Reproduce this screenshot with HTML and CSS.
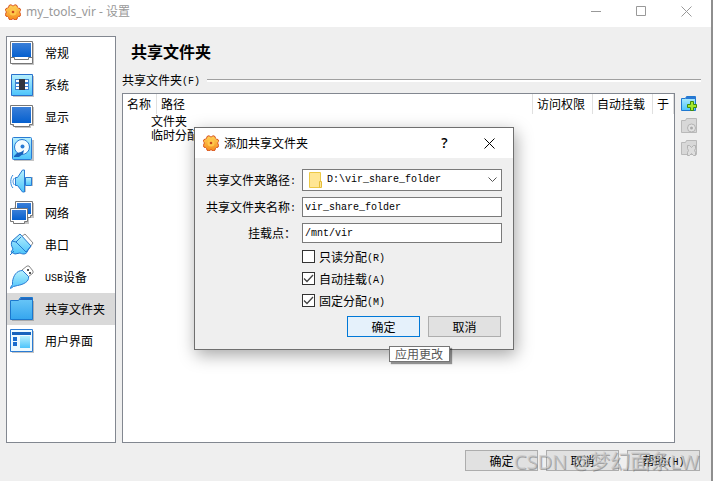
FILE: index.html
```html
<!DOCTYPE html>
<html lang="zh-CN">
<head>
    <meta charset="UTF-8">
    <meta name="viewport" content="width=device-width, initial-scale=1.0">
    <title>my_tools_vir - 设置</title>
    <link rel="stylesheet" href="styles.css">
</head>
<body>
    <!-- shared icon shapes -->
    <svg class="defs" width="0" height="0">
        <defs>
            <linearGradient id="screen" x1="0" y1="0" x2="0" y2="1">
                <stop offset="0" stop-color="#3a7fd8"/>
                <stop offset="1" stop-color="#0560cf"/>
            </linearGradient>
            <linearGradient id="aqua" x1="0" y1="0" x2="0" y2="1">
                <stop offset="0" stop-color="#b8f0fd"/>
                <stop offset="1" stop-color="#4cc4fb"/>
            </linearGradient>
            <linearGradient id="folder" x1="0" y1="0" x2="0" y2="1">
                <stop offset="0" stop-color="#6cc8f8"/>
                <stop offset="1" stop-color="#35a6ee"/>
            </linearGradient>
            <linearGradient id="orange" x1="0" y1="0" x2="0" y2="1">
                <stop offset="0" stop-color="#ffd65a"/>
                <stop offset="1" stop-color="#f58a1c"/>
            </linearGradient>
            <symbol id="gear" viewBox="0 0 16 16">
                <path d="M6 .7l1.200 1h1.600l1.200-1 2 .8.3 1.500 1.200 1.200 1.500.3.8 2-1 1v1.500l1 1.200-.8 2-1.500.3-1.200 1.200-.3 1.500-2 .8-1.200-1H7.200l-1.200 1-2-.8-.3-1.500-1.200-1.200-1.500-.3-.8-2 1-1.200V7.500l-1-1 .8-2 1.500-.3 1.200-1.200.3-1.500z" fill="url(#orange)" stroke="#d9541e"/>
                <circle cx="8" cy="8" r="3.500" fill="#ffc84a"/>
                <circle cx="8" cy="8" r="1.300" fill="#c8481a"/>
            </symbol>
        </defs>
    </svg>

    <div class="window">
        <header class="titlebar">
            <svg class="app-icon"><use href="#gear"/></svg>
            <span class="title">my_tools_vir - 设置</span>
            <button class="win-btn" aria-label="最小化"><svg width="11" height="11"><path d="M0 5.500h10"/></svg></button>
            <button class="win-btn" aria-label="最大化"><svg width="11" height="11"><path d="M.5.5h9v9h-9z"/></svg></button>
            <button class="win-btn" aria-label="关闭"><svg width="11" height="11"><path d="M.5.5l10 10M10.500.5l-10 10"/></svg></button>
        </header>

        <main class="main">
            <nav class="sidebar">
                <a href="#general">
                    <svg viewBox="0 0 24 24"><path d="M2 2h22v22H2z" fill="#c4c4c4"/><path d="M.5.5h22v22H.500z" fill="#fff" stroke="#777"/><path d="M2 2h19v14H2z" fill="url(#screen)"/><path d="M1 16.500h3.500v2h14v-2H22" fill="none" stroke="#777"/></svg>
                    常规</a>
                <a href="#system">
                    <svg viewBox="0 0 24 24"><path d="M3 3h21v21H3z" fill="#c4c4c4"/><path d="M1.500 1.500h21v21h-21z" fill="url(#aqua)" stroke="#2a72cc"/><path d="M5 6h14v11H5z" fill="#3d82d2"/><path d="M6 7h4v2H6zm0 4h4v2H6zm0 3h4v2H6zm8-7h4v2h-4zm0 4h4v2h-4zm0 3h4v2h-4z" fill="#fff"/><path d="M9 6h6v11H9z" fill="#33353d"/></svg>
                    系统</a>
                <a href="#display">
                    <svg viewBox="0 0 24 24"><path d="M2 2h22v19h-3v2H5v-2H2z" fill="#c4c4c4"/><path d="M.5.5h22v19h-3v2h-16v-2h-3z" fill="#fff" stroke="#777"/><path d="M2 2h19v16H2z" fill="url(#screen)"/></svg>
                    显示</a>
                <a href="#storage">
                    <svg viewBox="0 0 24 24"><path d="M4 3h20v21H4z" fill="#c4c4c4"/><rect x="2.500" y=".5" width="19" height="22" rx="1" fill="url(#aqua)" stroke="#2a7bd4"/><circle cx="12" cy="10" r="7.500" fill="#f4fcff" stroke="#2a7bd4"/><circle cx="12.500" cy="9.500" r="2" fill="#2a7bd4"/><path d="M4 19l3-3 4-1 3-2-1 4-4 3H4z" fill="#1763bd"/></svg>
                    存储</a>
                <a href="#audio">
                    <svg viewBox="0 0 24 24"><path d="M8 9l7-7v6h8v9h-7v6h-2l-6-6z" fill="#c4c4c4"/><path d="M15.500 8.500h6v8h-6z" fill="url(#aqua)" stroke="#2a7bd4"/><path d="M5.500 8.500h2l5-7.500h2v22h-2l-5-6.500h-2z" fill="url(#aqua)" stroke="#2a7bd4"/><path d="M3 6c-3 3-3 10 0 13M4.500 9c-2 2-2 5 0 7" fill="none" stroke="#3288dc"/></svg>
                    声音</a>
                <a href="#network">
                    <svg viewBox="0 0 24 24"><path d="M7 2h17v15h-5v6H5v-2H2V10z" fill="#c4c4c4"/><path d="M5.500.5h17v14h-2v2h-12v-2h-3z" fill="#fff" stroke="#777"/><path d="M7 2h14v11H7z" fill="url(#screen)"/><path d="M.5 7.500h17v13h-3v2h-11v-2h-3z" fill="#fff" stroke="#777"/><path d="M2 9h14v10H2z" fill="url(#screen)"/></svg>
                    网络</a>
                <a href="#serial">
                    <svg viewBox="0 0 24 24"><path d="M11 4l4-3 8 9-3 4" fill="#fff" stroke="#888"/><path d="M2 8l8-7 11 12-3 4c-1 4-4 5-8 3l-5 1-4-2 2-3c-2-4-2-5-1-8z" fill="url(#aqua)" stroke="#2477ce"/><path d="M2 8l4 1 5-5M6 9l10 10 5-6M4 18l-4 4" fill="none" stroke="#2477ce"/></svg>
                    串口</a>
                <a href="#usb">
                    <svg viewBox="0 0 24 24"><path d="M12 5l5-4h2l4 5v2l-5 4z" fill="#fff" stroke="#888"/><path d="M17 4h2v2h-2zm2 3h2v2h-2z" fill="#555"/><path d="M12.500 5.500l6 6c1 5-5 8-11 9l-4 1-3 2 0-1 2-3 0-3c1-6 4-11 10-11z" fill="url(#aqua)" stroke="#2a7bd4"/></svg>
                    <span><span class="latin">USB</span>设备</span></a>
                <a href="#shared" class="active">
                    <svg viewBox="0 0 24 24"><path d="M2 4h22v20H2z" fill="#aaa"/><path d="M.5 3.500h8l2-3h12v22H.500z" fill="url(#folder)" stroke="#1b78ce"/><path d="M9 3h13V1H11z" fill="#2368bd"/></svg>
                    共享文件夹</a>
                <a href="#ui">
                    <svg viewBox="0 0 24 24"><path d="M2 2h22v22H2z" fill="#c4c4c4"/><path d="M.5.5h22v22H.500z" fill="#edfaff" stroke="#2a7bd4"/><path d="M2 3h19v3H2z" fill="#1763bd"/><path d="M3 8h4v4H3zm0 5h4v4H3z" fill="#1b6ccd"/><path d="M10 7h10v12H10z" fill="url(#aqua)"/></svg>
                    用户界面</a>
            </nav>

            <section class="content">
                <h1>共享文件夹</h1>
                <div class="group-title"><span>共享文件夹<span class="latin">(F)</span></span></div>
                <div class="folders">
                    <div class="tree">
                        <table>
                            <colgroup>
                                <col class="col-name"><col><col class="col-access"><col class="col-access"><col class="col-at">
                            </colgroup>
                            <thead>
                                <tr><th>名称</th><th>路径</th><th>访问权限</th><th>自动挂载</th><th>于</th></tr>
                            </thead>
                            <tbody>
                                <tr><td colspan="5">文件夹</td></tr>
                                <tr><td colspan="5">临时分配</td></tr>
                            </tbody>
                        </table>
                    </div>
                    <div class="tools">
                        <button aria-label="添加共享文件夹">
                            <svg viewBox="0 0 16 16"><path d="M.5 2.500h4l1-2h9v14H.500z" fill="url(#aqua)" stroke="#1f78d0"/><path d="M5 1h10v2H5z" fill="#2a78d4"/><path d="M9.500 5.500h3v3h3v3h-3v3h-3v-3h-3v-3h3z" fill="#a4e82c" stroke="#3f8a0c"/></svg>
                        </button>
                        <button aria-label="编辑共享文件夹" disabled>
                            <svg viewBox="0 0 16 16"><path d="M.5 2.500h4l1-2h10v14H.500z" fill="#d8d8d8" stroke="#b9b9b9"/><circle cx="10.500" cy="10" r="4" fill="#e2e2e2" stroke="#b3b3b3"/><circle cx="10.500" cy="10" r="1.500" fill="#aaa"/></svg>
                        </button>
                        <button aria-label="删除共享文件夹" disabled>
                            <svg viewBox="0 0 16 16"><path d="M.5 2.500h4l1-2h10v14H.500z" fill="#d8d8d8" stroke="#b9b9b9"/><path d="M6.500 5.500h2l2 2 2-2h2v3l-1 2 1 2v3h-2l-2-2-2 2h-2v-3l1-2-1-2z" fill="#dedede" stroke="#b3b3b3"/></svg>
                        </button>
                    </div>
                </div>
            </section>
        </main>

        <footer class="footer">
            <button class="btn">确定</button>
            <button class="btn">取消</button>
            <button class="btn">帮助<span class="latin">(H)</span></button>
        </footer>
        <div class="watermark">CSDN @梦幻面条LW</div>
    </div>

    <div class="dialog" role="dialog" aria-labelledby="dialog-title">
        <header class="dialog-title">
            <svg class="app-icon"><use href="#gear"/></svg>
            <span id="dialog-title">添加共享文件夹</span>
            <button class="win-btn help" aria-label="帮助">?</button>
            <button class="win-btn" aria-label="关闭"><svg width="11" height="11"><path d="M.5.5l10 10M10.500.5l-10 10"/></svg></button>
        </header>
        <form class="form">
            <label for="path">共享文件夹路径<span class="latin">:</span></label>
            <div class="combo">
                <svg class="folder-icon" viewBox="0 0 14 16"><path d="M.5.5h11v15H.500z" fill="#ffe694" stroke="#ecc846"/><path d="M10.500 9.500h2v6h-2z" fill="#ffe694" stroke="#e5bd38"/></svg>
                <select id="path" name="path">
                    <option>D:\vir_share_folder</option>
                </select>
                <svg class="arrow" viewBox="0 0 9 6"><path d="M.5.5l4 4 4-4" fill="none" stroke="#555"/></svg>
            </div>

            <label for="name">共享文件夹名称<span class="latin">:</span></label>
            <input type="text" id="name" name="name" value="vir_share_folder">

            <label for="mount">挂载点：</label>
            <input type="text" id="mount" name="mount" value="/mnt/vir">

            <div class="checks">
                <label><input type="checkbox" name="readonly"><span>只读分配<span class="latin">(R)</span></span></label>
                <label><input type="checkbox" name="auto" checked><span>自动挂载<span class="latin">(A)</span></span></label>
                <label><input type="checkbox" name="permanent" checked><span>固定分配<span class="latin">(M)</span></span></label>
            </div>

            <div class="actions">
                <button type="button" class="btn primary">确定</button>
                <button type="button" class="btn">取消</button>
            </div>
        </form>
        <div class="tooltip" role="tooltip">应用更改</div>
    </div>
</body>
</html>
```
FILE: styles.css
```css
* {
    box-sizing: border-box;
}

body {
    margin: 0;
    font-family: "Noto Sans CJK SC", sans-serif;
    font-size: 12px;
    line-height: 16px;
    color: #000;
    background-color: #efefef;
}

button, input, select {
    font: inherit;
    color: inherit;
}

.defs {
    position: absolute;
}

.window {
    position: relative;
    display: flex;
    flex-direction: column;
    min-height: 100vh;
    border-right: 2px solid #8e8e8e;
}

/* title bars */
.titlebar {
    display: flex;
    align-items: center;
    height: 27px;
    padding: 0 2px 4px 5px;
    background-color: #fff;
    color: #999;
    font-family: "Noto Sans", "Noto Sans CJK SC", sans-serif;
}

.title {
    flex: 1;
    margin-left: 5px;
}

.app-icon {
    width: 16px;
    height: 16px;
}

.win-btn {
    display: flex;
    align-items: center;
    justify-content: center;
    width: 45px;
    height: 22px;
    padding: 0;
    border: none;
    background: none;
}

.win-btn svg {
    fill: none;
    stroke: currentColor;
}

/* main area */
.main {
    flex: 1;
    display: flex;
    gap: 6px;
    padding: 9px 10px 0 6px;
}

.sidebar {
    width: 110px;
    flex: none;
    border: 1px solid #828790;
    background-color: #fff;
}

.sidebar a {
    display: flex;
    align-items: center;
    gap: 11px;
    height: 32px;
    padding-left: 3px;
    color: #000;
    text-decoration: none;
}

.sidebar a.active {
    background-color: #d9d9d9;
}

.sidebar svg {
    width: 24px;
    height: 24px;
}

.latin {
    font-family: "Liberation Mono", monospace;
    font-size: 10px;
    line-height: 10px;
    vertical-align: 1px;
}

.content {
    flex: 1;
    display: flex;
    flex-direction: column;
}

h1 {
    margin: 3px 0 9px 9px;
    font-size: 16px;
    line-height: 24px;
}

.group-title {
    display: flex;
    align-items: center;
    gap: 7px;
    margin-bottom: 5px;
}

.group-title::after {
    content: "";
    flex: 1;
    height: 2px;
    border-top: 1px solid #a0a0a0;
    background-color: #fff;
}

.folders {
    flex: 1;
    display: flex;
    gap: 6px;
}

.tree {
    flex: 1;
    border: 1px solid #828790;
    background-color: #fff;
}

.tree table {
    width: 100%;
    table-layout: fixed;
    border-collapse: separate;
    border-spacing: 0;
}

.tree th {
    height: 20px;
    padding: 0 0 0 4px;
    border-right: 1px solid #e0e0e0;
    font-weight: normal;
    text-align: left;
    white-space: nowrap;
}

.tree td {
    padding: 0 0 0 28px;
    line-height: 14px;
}

.col-name {
    width: 34px;
}

.col-access {
    width: 60px;
}

.col-at {
    width: 21px;
}

.tools {
    display: flex;
    flex-direction: column;
    gap: 6px;
    width: 20px;
    padding-top: 3px;
}

.tools button {
    display: flex;
    width: 16px;
    height: 16px;
    padding: 0;
    border: none;
    background: none;
}

.tools svg {
    width: 16px;
    height: 16px;
}

.footer {
    display: flex;
    justify-content: flex-end;
    gap: 8px;
    padding: 7px 11px 10px;
}

.btn {
    width: 73px;
    height: 21px;
    padding: 0;
    border: 1px solid #adadad;
    background-color: #e1e1e1;
    line-height: 16px;
}

.btn.primary {
    border-color: #0078d7;
    background-color: #e5f1fb;
}

.watermark {
    position: absolute;
    right: 12px;
    bottom: 6px;
    font-family: "Open Sans", "Noto Sans CJK SC", sans-serif;
    font-size: 20px;
    line-height: 26px;
    color: rgba(200, 200, 200, 0.7);
    text-shadow: 1px 1px 0 rgba(100, 100, 100, 0.5);
    white-space: nowrap;
    pointer-events: none;
}

/* add folder dialog */
.dialog {
    position: absolute;
    left: 194px;
    top: 127px;
    width: 320px;
    border: 1px solid #6f6f6f;
    background-color: #efefef;
    box-shadow: 2px 5px 16px rgba(0, 0, 0, 0.35);
}

.dialog-title {
    display: flex;
    align-items: center;
    height: 30px;
    padding-left: 8px;
    padding-right: 1px;
    background-color: #fff;
}

.dialog-title span {
    flex: 1;
    margin-left: 5px;
}

.dialog .help {
    font-family: "Open Sans", sans-serif;
    font-size: 14px;
    font-weight: 600;
}

.form {
    display: grid;
    grid-template-columns: 94px 1fr;
    column-gap: 6px;
    row-gap: 6px;
    align-items: center;
    padding: 11px 11px 12px 7px;
}

.form > label {
    text-align: right;
    white-space: nowrap;
}

.form input[type="text"] {
    width: 100%;
    height: 20px;
    padding: 0 2px;
    border: 1px solid #7a7a7a;
    background-color: #fff;
    font-family: "Liberation Mono", monospace;
    font-size: 10px;
}

.combo {
    display: grid;
    grid-template-columns: 14px 1fr 9px;
    align-items: center;
    gap: 4px;
    height: 22px;
    padding: 0 4px 0 6px;
    border: 1px solid #7a7a7a;
    background-color: #fff;
}

.folder-icon {
    width: 14px;
    height: 16px;
}

.arrow {
    width: 9px;
    height: 6px;
}

.combo select {
    appearance: none;
    width: 100%;
    padding: 0;
    border: none;
    background: none;
    font-family: "Liberation Mono", monospace;
    font-size: 10px;
}

.checks {
    grid-column: 2;
    display: flex;
    flex-direction: column;
    gap: 7px;
}

.checks label {
    display: flex;
    align-items: center;
    height: 15px;
    line-height: 15px;
}

.checks input {
    appearance: none;
    width: 13px;
    height: 13px;
    margin: 0 4px 0 0;
    border: 1px solid #333;
    background-color: #fff;
}

.checks input:checked {
    background-image: url("data:image/svg+xml,%3Csvg xmlns='http://www.w3.org/2000/svg' viewBox='0 0 11 11'%3E%3Cpath d='M1 5.500l3 3 6-6.500' fill='none' stroke='%23444' stroke-width='1.300'/%3E%3C/svg%3E");
}

.actions {
    grid-column: 1 / -1;
    display: flex;
    justify-content: flex-end;
    gap: 8px;
    padding: 2px 1px 0 0;
}

.tooltip {
    position: absolute;
    left: 194px;
    top: 218px;
    padding: 0 6px 0 5px;
    border: 1px solid #767676;
    background-color: #fff;
    color: #575757;
    line-height: 14px;
    box-shadow: 2px 2px 1px rgba(0, 0, 0, 0.4);
}
```
